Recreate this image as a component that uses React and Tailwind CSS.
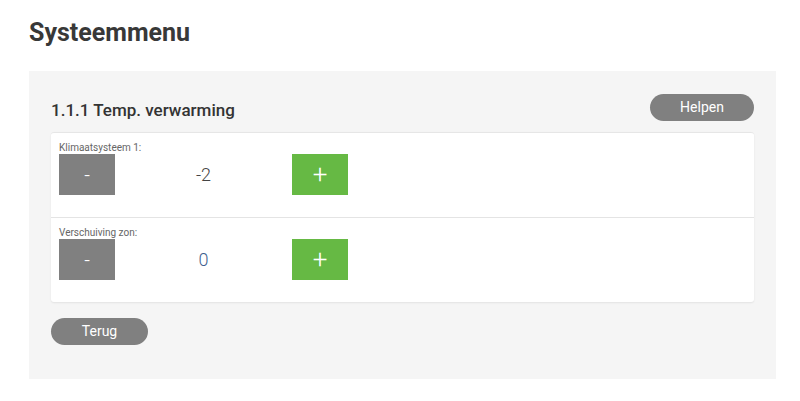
import React, { useState } from "react";

const rows = [
    { label: "Klimaatsysteem 1:", value: -2, color: "text-[#444444]" },
    { label: "Verschuiving zon:", value: 0, color: "text-[#3f5f8f]" },
];

const StepRow = ({ label, initial, color, last }) => {
    const [value, setValue] = useState(initial);

    return (
        <div className={`px-2 pt-[8px] pb-[22px] ${last ? "" : "border-b border-[#e4e4e4]"}`}>
            <div className="text-[10px] leading-[13px] text-[#666666]">{label}</div>
            <div className="flex items-center">
                <button
                    onClick={() => setValue(value - 1)}
                    className="w-[56px] h-[41px] bg-[#808080] text-white text-[20px] font-light flex items-center justify-center"
                >
                    -
                </button>
                <div className={`w-[177px] text-center text-[18px] font-light ${color}`}>{value}</div>
                <button
                    onClick={() => setValue(value + 1)}
                    className="w-[56px] h-[41px] bg-[#66b944] text-white text-[26px] font-light flex items-center justify-center"
                >
                    +
                </button>
            </div>
        </div>
    );
};

const App = () => {
    return (
        <div className="w-[800px] h-[401px] bg-white font-['Roboto',sans-serif] text-[#333333]">
            <div className="px-[29px] pt-[14px] pb-[20px]">
                <h1 className="text-[25px] font-bold leading-[37px] text-[#383838]">Systeemmenu</h1>
            </div>
            <div className="ml-[29px] w-[747px] h-[308px] bg-[#f5f5f5] px-[22px] pt-[23px]">
                <div className="flex items-end justify-between mb-[11px]">
                    <h2 className="text-[17px] font-medium leading-[22px] text-[#333333]">1.1.1 Temp. verwarming</h2>
                    <button className="w-[104px] h-[27px] rounded-full bg-[#808080] text-white text-[14px]">
                        Helpen
                    </button>
                </div>
                <div className="bg-white rounded-[3px] border-t border-[#e6e6e6] shadow-[0_1px_2px_rgba(0,0,0,0.08)]">
                    {rows.map((row, index) => (
                        <StepRow
                            key={index}
                            label={row.label}
                            initial={row.value}
                            color={row.color}
                            last={index === rows.length - 1}
                        />
                    ))}
                </div>
                <button className="mt-[16px] w-[97px] h-[27px] rounded-full bg-[#808080] text-white text-[14px]">
                    Terug
                </button>
            </div>
        </div>
    );
};

export default App;
